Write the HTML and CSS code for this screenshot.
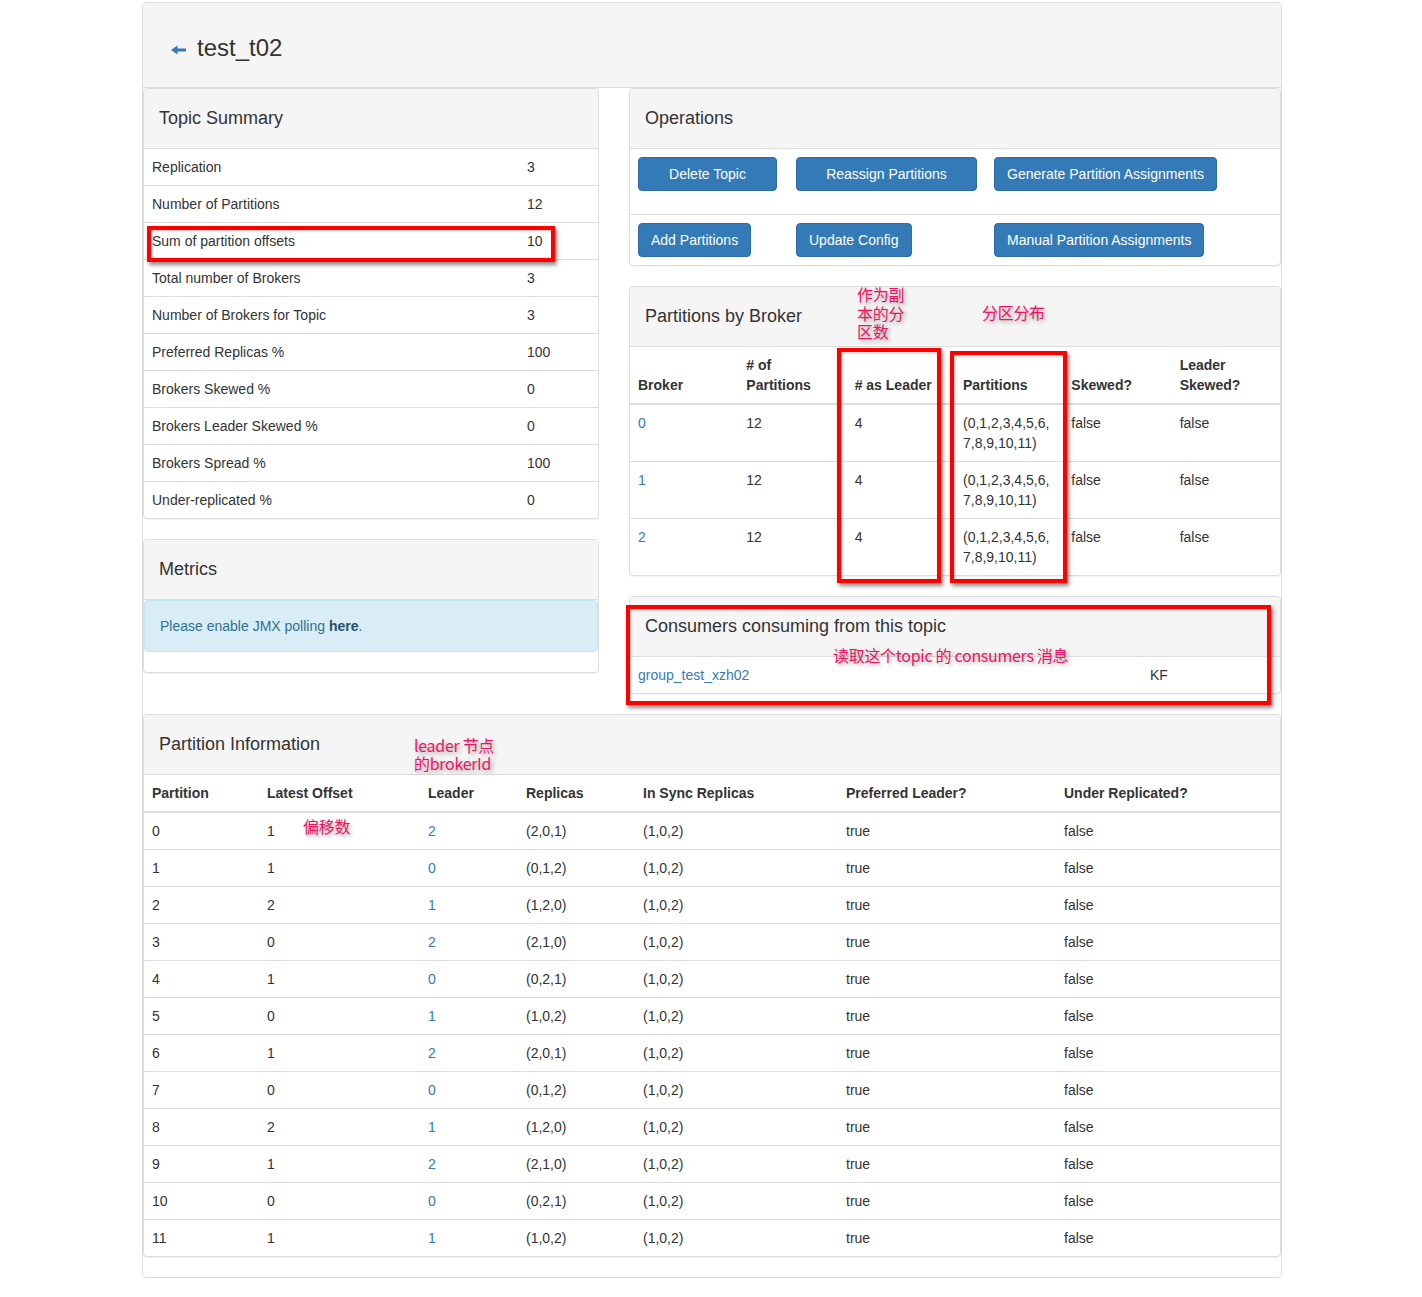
FILE: index.html
```html
<!DOCTYPE html>
<html>
<head>
<meta charset="utf-8">
<title>test_t02</title>
<link rel="stylesheet" href="styles.css">
</head>
<body>
<div class="page">
  <div class="outer">
    <div class="outer-head">
      <svg class="back" width="15" height="10" viewBox="0 0 15 10"><path d="M0 5 L6.5 0.5 L6.5 3.5 L15 3.5 L15 6.5 L6.5 6.5 L6.5 9.5 Z" fill="#337ab7"/></svg>
      <h1 class="title">test_t02</h1>
    </div>
    <div class="outer-body">
      <div class="cols">
        <div class="col">
          <div class="panel">
            <div class="panel-heading">Topic Summary</div>
            <table class="tbl summary">
              <colgroup><col class="s-k"><col></colgroup>
              <tbody>
                <tr><td>Replication</td><td>3</td></tr>
                <tr><td>Number of Partitions</td><td>12</td></tr>
                <tr><td>Sum of partition offsets</td><td>10</td></tr>
                <tr><td>Total number of Brokers</td><td>3</td></tr>
                <tr><td>Number of Brokers for Topic</td><td>3</td></tr>
                <tr><td>Preferred Replicas %</td><td>100</td></tr>
                <tr><td>Brokers Skewed %</td><td>0</td></tr>
                <tr><td>Brokers Leader Skewed %</td><td>0</td></tr>
                <tr><td>Brokers Spread %</td><td>100</td></tr>
                <tr><td>Under-replicated %</td><td>0</td></tr>
              </tbody>
            </table>
          </div>
          <div class="panel">
            <div class="panel-heading">Metrics</div>
            <div class="alert">Please enable JMX polling <b>here</b>.</div>
          </div>
        </div>
        <div class="col">
          <div class="panel">
            <div class="panel-heading">Operations</div>
            <table class="tbl ops">
              <colgroup><col class="o1"><col class="o2"><col></colgroup>
              <tbody>
                <tr class="ops-first">
                  <td><span class="btn w-del">Delete Topic</span></td>
                  <td><span class="btn w-reassign">Reassign Partitions</span></td>
                  <td><span class="btn">Generate Partition Assignments</span></td>
                </tr>
                <tr>
                  <td><span class="btn">Add Partitions</span></td>
                  <td><span class="btn">Update Config</span></td>
                  <td><span class="btn">Manual Partition Assignments</span></td>
                </tr>
              </tbody>
            </table>
          </div>
          <div class="panel">
            <div class="panel-heading">Partitions by Broker</div>
            <table class="tbl brokers">
              <thead>
                <tr><th>Broker</th><th># of Partitions</th><th># as Leader</th><th>Partitions</th><th>Skewed?</th><th>Leader Skewed?</th></tr>
              </thead>
              <tbody>
                <tr><td><a>0</a></td><td>12</td><td>4</td><td>(0,1,2,3,4,5,6,<br>7,8,9,10,11)</td><td>false</td><td>false</td></tr>
                <tr><td><a>1</a></td><td>12</td><td>4</td><td>(0,1,2,3,4,5,6,<br>7,8,9,10,11)</td><td>false</td><td>false</td></tr>
                <tr><td><a>2</a></td><td>12</td><td>4</td><td>(0,1,2,3,4,5,6,<br>7,8,9,10,11)</td><td>false</td><td>false</td></tr>
              </tbody>
            </table>
          </div>
          <div class="panel">
            <div class="panel-heading">Consumers consuming from this topic</div>
            <table class="tbl consumers">
              <colgroup><col class="c1"><col></colgroup>
              <tbody>
                <tr><td><a>group_test_xzh02</a></td><td>KF</td></tr>
              </tbody>
            </table>
          </div>
        </div>
      </div>
      <div class="panel">
        <div class="panel-heading">Partition Information</div>
        <table class="tbl pinfo">
          <colgroup><col class="p1"><col class="p2"><col class="p3"><col class="p4"><col class="p5"><col class="p6"><col></colgroup>
          <thead>
            <tr><th>Partition</th><th>Latest Offset</th><th>Leader</th><th>Replicas</th><th>In Sync Replicas</th><th>Preferred Leader?</th><th>Under Replicated?</th></tr>
          </thead>
          <tbody>
            <tr><td>0</td><td>1</td><td><a>2</a></td><td>(2,0,1)</td><td>(1,0,2)</td><td>true</td><td>false</td></tr>
            <tr><td>1</td><td>1</td><td><a>0</a></td><td>(0,1,2)</td><td>(1,0,2)</td><td>true</td><td>false</td></tr>
            <tr><td>2</td><td>2</td><td><a>1</a></td><td>(1,2,0)</td><td>(1,0,2)</td><td>true</td><td>false</td></tr>
            <tr><td>3</td><td>0</td><td><a>2</a></td><td>(2,1,0)</td><td>(1,0,2)</td><td>true</td><td>false</td></tr>
            <tr><td>4</td><td>1</td><td><a>0</a></td><td>(0,2,1)</td><td>(1,0,2)</td><td>true</td><td>false</td></tr>
            <tr><td>5</td><td>0</td><td><a>1</a></td><td>(1,0,2)</td><td>(1,0,2)</td><td>true</td><td>false</td></tr>
            <tr><td>6</td><td>1</td><td><a>2</a></td><td>(2,0,1)</td><td>(1,0,2)</td><td>true</td><td>false</td></tr>
            <tr><td>7</td><td>0</td><td><a>0</a></td><td>(0,1,2)</td><td>(1,0,2)</td><td>true</td><td>false</td></tr>
            <tr><td>8</td><td>2</td><td><a>1</a></td><td>(1,2,0)</td><td>(1,0,2)</td><td>true</td><td>false</td></tr>
            <tr><td>9</td><td>1</td><td><a>2</a></td><td>(2,1,0)</td><td>(1,0,2)</td><td>true</td><td>false</td></tr>
            <tr><td>10</td><td>0</td><td><a>0</a></td><td>(0,2,1)</td><td>(1,0,2)</td><td>true</td><td>false</td></tr>
            <tr><td>11</td><td>1</td><td><a>1</a></td><td>(1,0,2)</td><td>(1,0,2)</td><td>true</td><td>false</td></tr>
          </tbody>
        </table>
      </div>
    </div>
  </div>

  <div class="mark mark-sum"></div>
  <div class="mark mark-leader"></div>
  <div class="mark mark-parts"></div>
  <div class="mark mark-consumers"></div>

  <div class="note note-replica">作为副<br>本的分<br>区数</div>
  <div class="note note-dist">分区分布</div>
  <div class="note note-consumers">读取这个topic 的 consumers 消息</div>
  <div class="note note-leader">leader 节点<br>的brokerId</div>
  <div class="note note-offset">偏移数</div>
</div>
</body>
</html>
```

FILE: styles.css
```css
* { box-sizing: border-box; }
html, body { margin: 0; padding: 0; background: #fff; }
body {
  font-family: "Liberation Sans", Arial, sans-serif;
  font-size: 14px;
  line-height: 20px;
  color: #333;
}
a { color: #337ab7; text-decoration: none; }

.page {
  position: relative;
  width: 1422px;
  padding-top: 2px;
  padding-bottom: 20px;
}

.outer {
  margin-left: 142px;
  width: 1140px;
  border: 1px solid #ddd;
  border-radius: 4px;
}
.outer-head {
  height: 85px;
  background: #f5f5f5;
  border-bottom: 1px solid #ddd;
  display: flex;
  align-items: flex-start;
  padding: 32px 0 0 28px;
}
.back { margin-top: 10px; margin-right: 11px; flex: none; }
.title {
  margin: 0;
  font-size: 24px;
  line-height: 26px;
  font-weight: normal;
  color: #333;
}

.cols {
  display: grid;
  grid-template-columns: 456px 652px;
  column-gap: 30px;
  align-items: start;
}

.panel {
  background: #fff;
  border: 1px solid #ddd;
  border-radius: 4px;
  margin-bottom: 20px;
  box-shadow: 0 1px 1px rgba(0,0,0,.05);
}
.panel-heading {
  background: #f5f5f5;
  border-bottom: 1px solid #ddd;
  padding: 20px 15px;
  font-size: 18px;
  line-height: 19px;
  color: #333;
  border-radius: 3px 3px 0 0;
}

.tbl {
  width: 100%;
  border-collapse: collapse;
  table-layout: fixed;
}
.tbl td, .tbl th {
  padding: 8px;
  text-align: left;
  vertical-align: top;
  border-top: 1px solid #ddd;
}
.tbl tbody tr:first-child td { border-top: 0; }
.tbl th {
  font-weight: bold;
  vertical-align: bottom;
  border-top: 0;
  border-bottom: 2px solid #ddd;
}

.s-k { width: 375px; }

.o1 { width: 158px; }
.o2 { width: 198px; }
.ops-first td { padding-bottom: 23px; }
.btn {
  display: inline-block;
  background: #337ab7;
  border: 1px solid #2e6da4;
  color: #fff;
  border-radius: 4px;
  padding: 6px 12px;
  font-size: 14px;
  line-height: 20px;
  text-align: center;
  white-space: nowrap;
}
.w-del { width: 139px; }
.w-reassign { width: 181px; }

.c1 { width: 512px; }

.p1 { width: 115px; }
.p2 { width: 161px; }
.p3 { width: 98px; }
.p4 { width: 117px; }
.p5 { width: 203px; }
.p6 { width: 218px; }

.alert {
  background: #d9edf7;
  border: 1px solid #bce8f1;
  color: #31708f;
  border-radius: 4px;
  padding: 15px;
  margin-bottom: 20px;
}
.alert b { color: #245269; }

.mark {
  position: absolute;
  border: 4px solid #ff0000;
  box-shadow: 2px 3px 4px rgba(0,0,0,.45), inset 1px 1px 3px rgba(0,0,0,.25);
}
.mark-sum { left: 147px; top: 226px; width: 408px; height: 36px; }
.mark-leader { left: 837px; top: 348px; width: 104px; height: 235px; }
.mark-parts { left: 950px; top: 351px; width: 117px; height: 232px; }
.mark-consumers { left: 626px; top: 605px; width: 645px; height: 100px; }

.note {
  position: absolute;
  font-family: "Noto Sans CJK SC", "Liberation Sans", sans-serif;
  font-size: 16px;
  line-height: 18px;
  letter-spacing: -0.3px;
  color: #ee1464;
  white-space: nowrap;
  text-shadow: 2px 2px 4px rgba(0,0,0,.35);
}
.note-replica { left: 857px; top: 285px; line-height: 18.5px; }
.note-dist { left: 982px; top: 303px; }
.note-consumers { left: 833px; top: 646px; }
.note-leader { left: 414px; top: 737px; line-height: 17.5px; }
.note-offset { left: 303px; top: 817px; }
```
